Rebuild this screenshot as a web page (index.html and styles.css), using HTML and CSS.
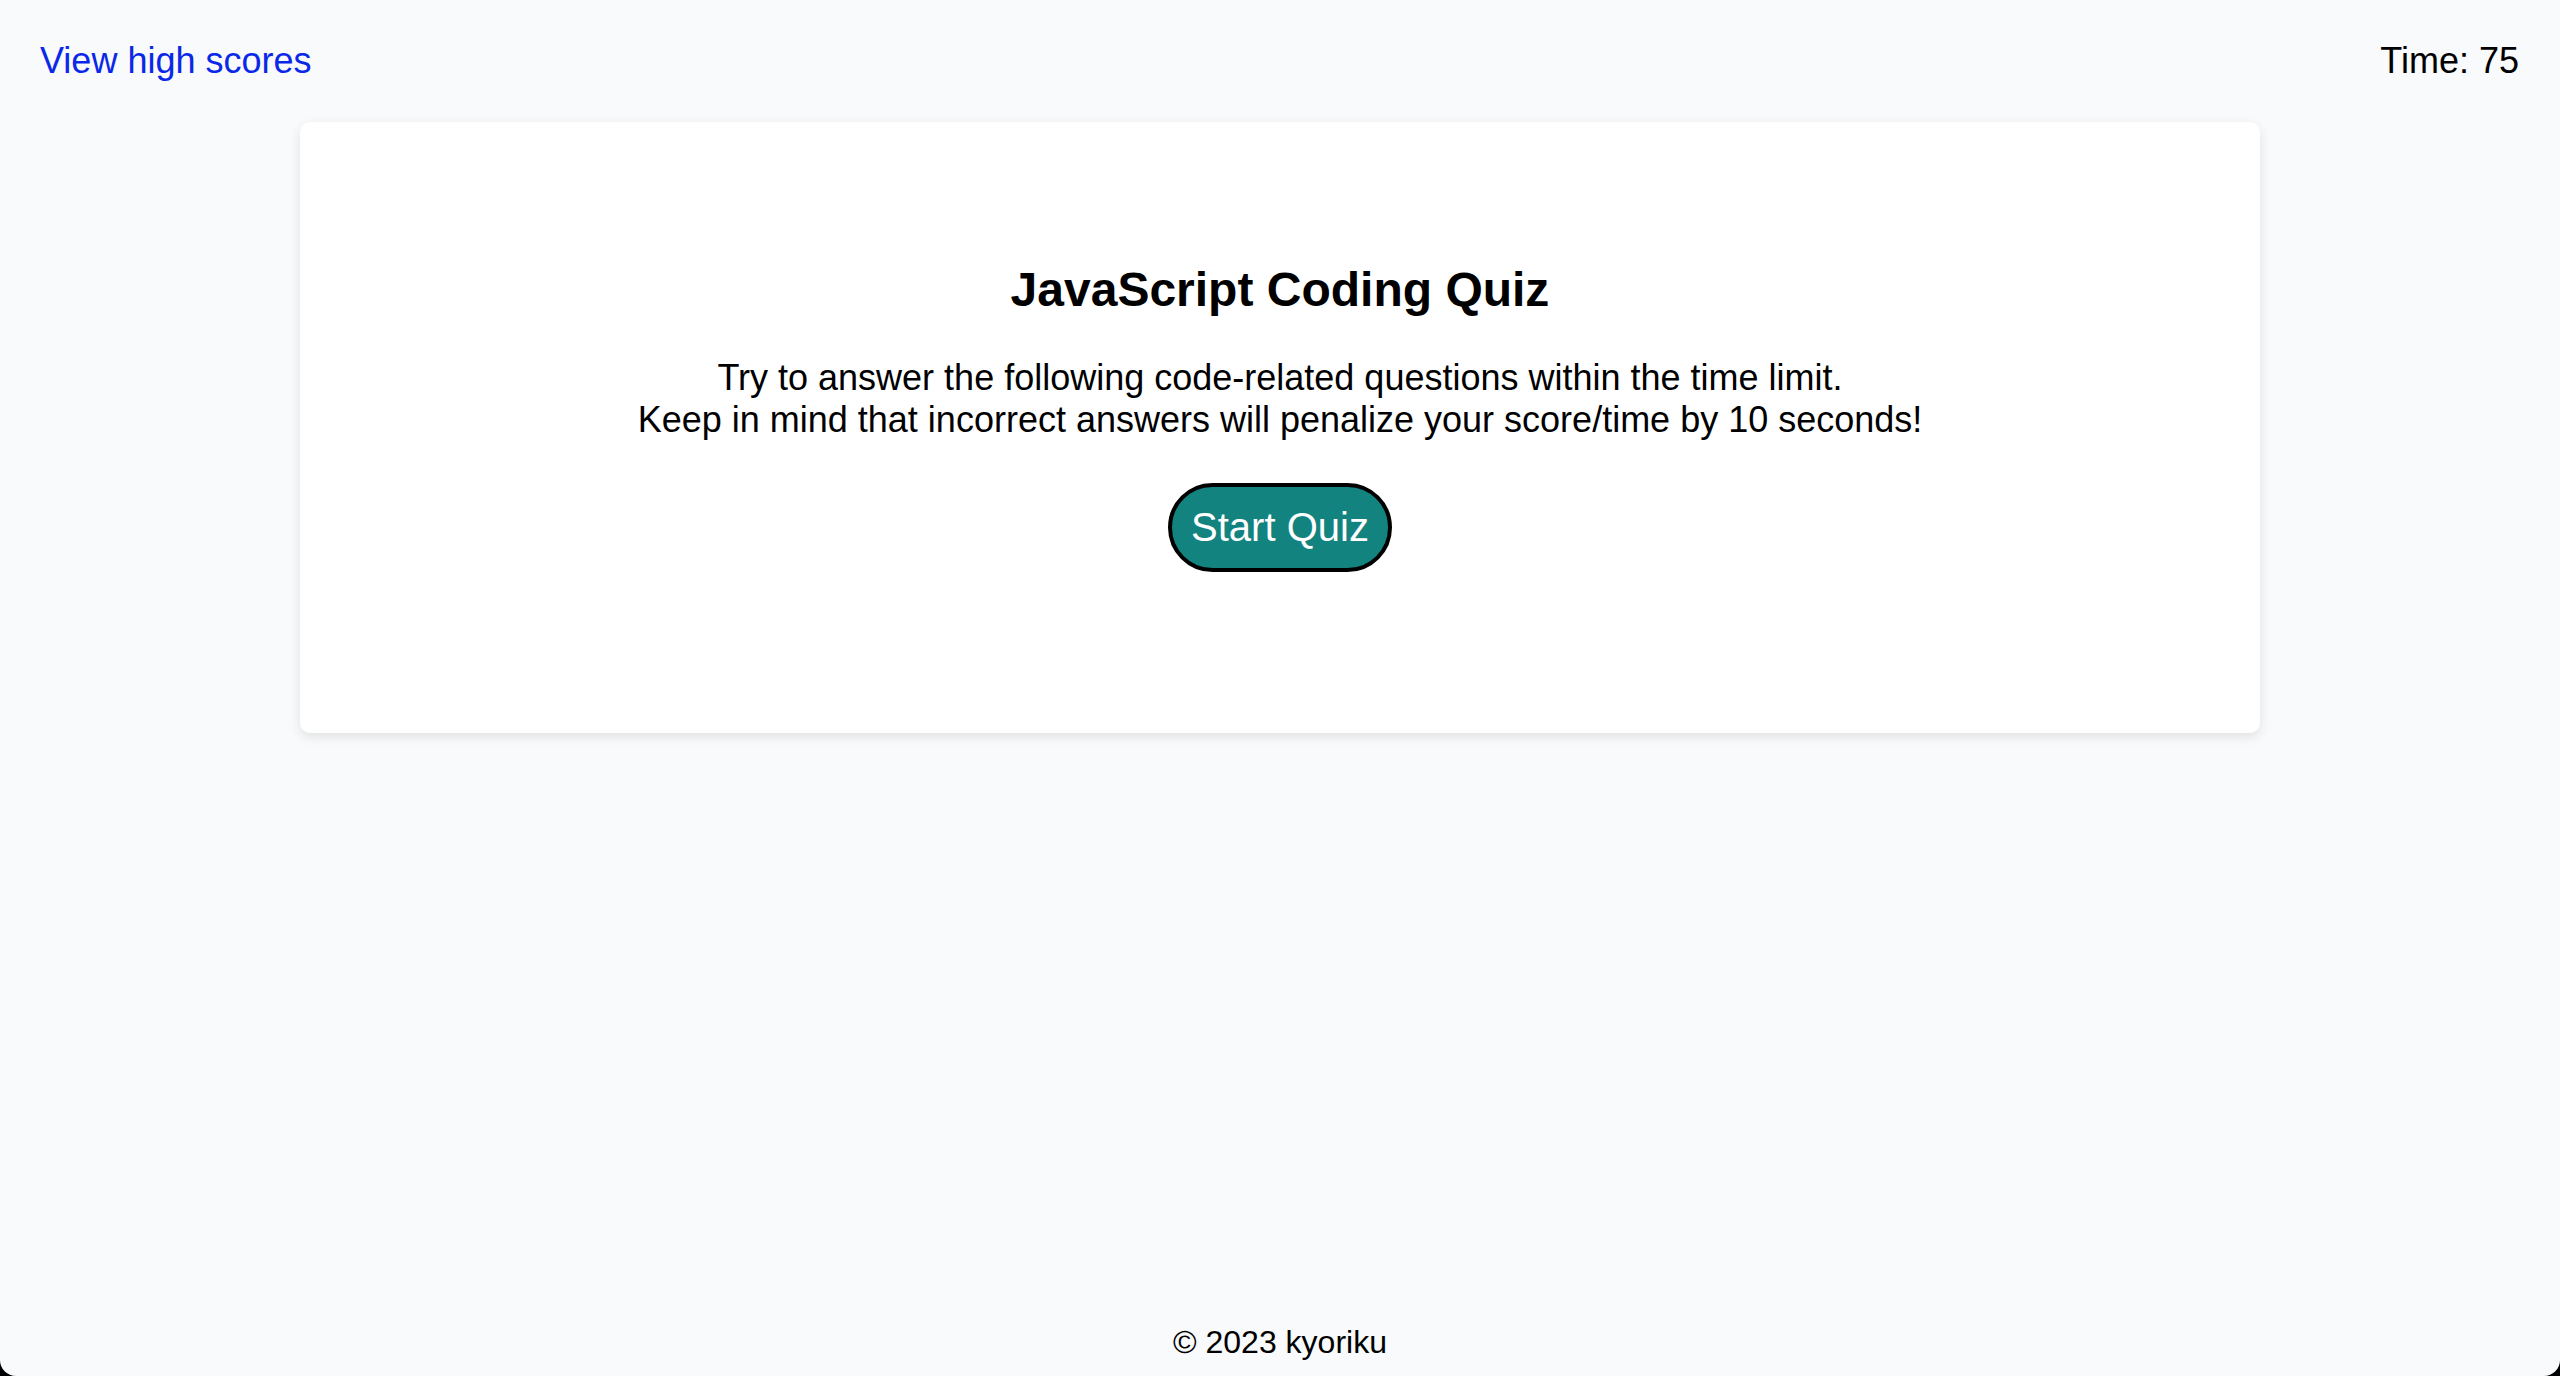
FILE: index.html
```html
<!DOCTYPE html>
<html lang="en">
<head>
<meta charset="utf-8">
<title>JavaScript Coding Quiz</title>
<link rel="stylesheet" href="styles.css">
</head>
<body>
<div class="window">
  <header class="topbar">
    <a class="scores-link" href="#">View high scores</a>
    <span class="timer">Time: 75</span>
  </header>
  <main class="content">
    <section class="card">
      <h1 class="title">JavaScript Coding Quiz</h1>
      <p class="intro">Try to answer the following code-related questions within the time limit.<br>Keep in mind that incorrect answers will penalize your score/time by 10 seconds!</p>
      <button class="start-btn" type="button">Start Quiz</button>
    </section>
  </main>
  <footer class="footer">© 2023 kyoriku</footer>
</div>
</body>
</html>
```
FILE: styles.css
```css
html, body {
  margin: 0;
  padding: 0;
  height: 100%;
}

body {
  background: #000;
  font-family: "Liberation Sans", Arial, sans-serif;
  color: #000;
}

.window {
  min-height: 1376px;
  background: #f9fafb;
  border-radius: 0 0 16px 16px;
  display: flex;
  flex-direction: column;
  box-sizing: border-box;
}

.topbar {
  display: flex;
  justify-content: space-between;
  align-items: flex-start;
  padding: 40px 41px 0 40px;
  font-size: 36px;
}

.scores-link {
  color: #0a28e8;
  text-decoration: none;
}

.timer {
  color: #000;
}

.content {
  flex: 1;
  display: flex;
  justify-content: center;
  align-items: flex-start;
  padding-top: 40px;
}

.card {
  width: 1960px;
  box-sizing: border-box;
  background: #fff;
  border-radius: 10px;
  box-shadow: 0 4px 12px rgba(0, 0, 0, 0.1);
  padding: 140px 40px 161px;
  display: flex;
  flex-direction: column;
  align-items: center;
  text-align: center;
}

.title {
  margin: 0 0 40px;
  font-size: 48px;
  font-weight: bold;
  line-height: normal;
}

.intro {
  margin: 0 0 42px;
  font-size: 36px;
  line-height: normal;
}

.start-btn {
  font-family: "Liberation Sans", Arial, sans-serif;
  font-size: 40px;
  line-height: normal;
  color: #fff;
  background: #12837f;
  border: 4px solid #000;
  border-radius: 46px;
  padding: 18px 19px;
  cursor: pointer;
}

.footer {
  text-align: center;
  font-size: 32px;
  padding-bottom: 15px;
}
```
